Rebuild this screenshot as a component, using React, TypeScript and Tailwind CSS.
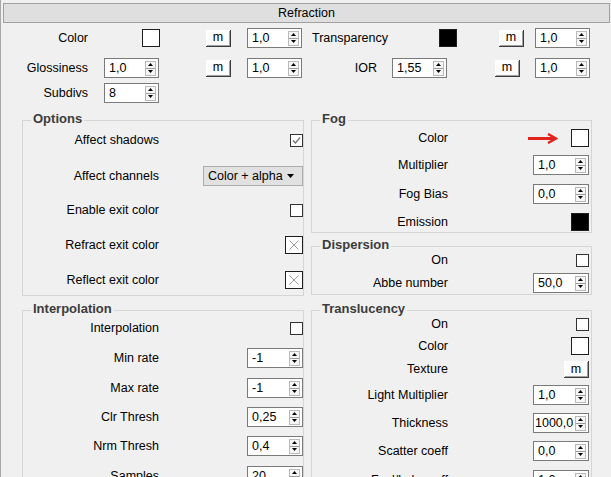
import type { ReactNode } from 'react';

function Spinner({ value, w = 'w-[55px]', pad = 'pl-[4px]' }: { value: string; w?: string; pad?: string }) {
  return (
    <div className={`flex h-[20px] items-center border border-[#7a7a7a] bg-white ${w}`}>
      <span className={`flex-1 overflow-hidden whitespace-nowrap leading-none ${pad}`}>{value}</span>
      <div className="mr-[2px] flex h-[15px] w-[11px] flex-col border border-[#b9b9b9] bg-[#f6f6f6]">
        <div className="flex flex-1 items-center justify-center border-b border-[#9a9a9a]">
          <svg width="5" height="3" viewBox="0 0 5 3">
            <path d="M2.5 0 L5 3 L0 3 Z" fill="#000" />
          </svg>
        </div>
        <div className="flex flex-1 items-center justify-center">
          <svg width="5" height="3" viewBox="0 0 5 3">
            <path d="M0 0 L5 0 L2.5 3 Z" fill="#000" />
          </svg>
        </div>
      </div>
    </div>
  );
}

function MButton() {
  return (
    <div className="flex h-[17px] w-[25px] items-center justify-center border-r border-b border-[#3c3c3c] bg-[#fcfcfc] leading-none shadow-[inset_1px_1px_0_#ffffff,inset_-1px_-1px_0_#a0a0a0]">
      m
    </div>
  );
}

function Swatch({ dark = false }: { dark?: boolean }) {
  return <div className={`h-[18px] w-[18px] border border-[#1e1e1e] ${dark ? 'bg-black' : 'bg-white'}`} />;
}

function CrossSwatch() {
  return (
    <div className="h-[18px] w-[18px] border border-[#1e1e1e] bg-white">
      <svg width="16" height="16" viewBox="0 0 16 16">
        <path d="M3.5 3.5 L12.5 12.5 M12.5 3.5 L3.5 12.5" stroke="#9a9a9a" strokeWidth="1" />
      </svg>
    </div>
  );
}

function Check({ checked = false }: { checked?: boolean }) {
  return (
    <div className="h-[13px] w-[13px] border border-[#333333] bg-white">
      {checked && (
        <svg width="11" height="11" viewBox="0 0 11 11">
          <path d="M2 5.5 L4.5 8 L9 2.5" stroke="#6e6e6e" strokeWidth="1.2" fill="none" />
        </svg>
      )}
    </div>
  );
}

function Dropdown() {
  return (
    <div className="flex h-[20px] w-[100px] items-center justify-between border border-[#adadad] bg-[#e1e1e1] pl-[4px] pr-[8px]">
      <span className="leading-none">Color + alpha</span>
      <svg width="7" height="4" viewBox="0 0 7 4">
        <path d="M0 0 L7 0 L3.5 4 Z" fill="#000" />
      </svg>
    </div>
  );
}

function RedArrow() {
  return (
    <svg width="30" height="11" viewBox="0 0 30 11" className="mr-[13px]">
      <path d="M0 5.5 H26" stroke="#e3231e" strokeWidth="3" />
      <path d="M20 1 L28 5.5 L20 10" stroke="#e3231e" strokeWidth="2.5" fill="none" />
    </svg>
  );
}

function Group({ title, className, children }: { title: string; className: string; children: ReactNode }) {
  return (
    <div className={`relative border border-[#d5d5d5] ${className}`}>
      <span className="absolute -top-[10px] left-[8px] bg-[#f0f0f0] px-[2px] text-[13px] font-bold leading-[15px] text-[#3c3c3c]">
        {title}
      </span>
      {children}
    </div>
  );
}

function Row({ label, mt, children }: { label: string; mt: string; children: ReactNode }) {
  return (
    <div className={`flex items-center ${mt}`}>
      <div className="w-[136px] whitespace-nowrap text-right leading-none">{label}</div>
      <div className="flex flex-1 items-center justify-end">{children}</div>
    </div>
  );
}

export default function App() {
  return (
    <div className="h-[477px] w-[611px] overflow-hidden bg-[#f0f0f0] font-['Liberation_Sans',Arial,sans-serif] text-[12.5px] text-black shadow-[inset_1px_0_0_#a8a8a8]">
      {/* Rollout title */}
      <div className="mt-[3px] mr-[1px] ml-[3px] flex h-[20px] items-center justify-center border border-[#a0a0a0] bg-[#dfdfdf] leading-none">
        Refraction
      </div>

      {/* Main parameters */}
      <div className="mt-[5px] flex h-[20px] items-center">
        <div className="w-[88px] text-right leading-none">Color</div>
        <div className="ml-[54px]"><Swatch /></div>
        <div className="ml-[46px]"><MButton /></div>
        <div className="ml-[16px]"><Spinner value="1,0" /></div>
        <div className="ml-[10px] w-[127px] leading-none">Transparency</div>
        <Swatch dark />
        <div className="ml-[42px]"><MButton /></div>
        <div className="ml-[11px]"><Spinner value="1,0" /></div>
      </div>
      <div className="mt-[10px] flex h-[20px] items-center">
        <div className="w-[88px] text-right leading-none">Glossiness</div>
        <div className="ml-[16px]"><Spinner value="1,0" /></div>
        <div className="ml-[47px]"><MButton /></div>
        <div className="ml-[16px]"><Spinner value="1,0" /></div>
        <div className="w-[75px] text-right leading-none">IOR</div>
        <div className="ml-[15px]"><Spinner value="1,55" /></div>
        <div className="ml-[48px]"><MButton /></div>
        <div className="ml-[15px]"><Spinner value="1,0" /></div>
      </div>
      <div className="mt-[5px] flex h-[20px] items-center">
        <div className="w-[88px] text-right leading-none">Subdivs</div>
        <div className="ml-[16px]"><Spinner value="8" /></div>
      </div>

      {/* Groups */}
      <div className="mt-[17px] flex items-start">
        <div className="ml-[22px] w-[282px]">
          <Group title="Options" className="h-[176px]">
            <Row label="Affect shadows" mt="mt-[13px]"><Check checked /></Row>
            <Row label="Affect channels" mt="mt-[19px]"><Dropdown /></Row>
            <Row label="Enable exit color" mt="mt-[18px]"><Check /></Row>
            <Row label="Refract exit color" mt="mt-[19px]"><CrossSwatch /></Row>
            <Row label="Reflect exit color" mt="mt-[17px]"><CrossSwatch /></Row>
          </Group>
          <Group title="Interpolation" className="mt-[14px] h-[200px]">
            <Row label="Interpolation" mt="mt-[11px]"><Check /></Row>
            <Row label="Min rate" mt="mt-[13px]"><Spinner value="-1" w="w-[56px]" /></Row>
            <Row label="Max rate" mt="mt-[10px]"><Spinner value="-1" w="w-[56px]" /></Row>
            <Row label="Clr Thresh" mt="mt-[9px]"><Spinner value="0,25" w="w-[56px]" /></Row>
            <Row label="Nrm Thresh" mt="mt-[9px]"><Spinner value="0,4" w="w-[56px]" /></Row>
            <Row label="Samples" mt="mt-[10px]"><Spinner value="20" w="w-[56px]" /></Row>
          </Group>
        </div>

        <div className="ml-[7px] w-[281px] pr-0">
          <Group title="Fog" className="h-[113px] pr-[2px]">
            <Row label="Color" mt="mt-[8px]"><RedArrow /><Swatch /></Row>
            <Row label="Multiplier" mt="mt-[8px]"><Spinner value="1,0" w="w-[56px]" /></Row>
            <Row label="Fog Bias" mt="mt-[9px]"><Spinner value="0,0" w="w-[56px]" /></Row>
            <Row label="Emission" mt="mt-[9px]"><Swatch dark /></Row>
          </Group>
          <Group title="Dispersion" className="mt-[13px] h-[49px] pr-[2px]">
            <Row label="On" mt="mt-[7px]"><Check /></Row>
            <Row label="Abbe number" mt="mt-[6px]"><Spinner value="50,0" w="w-[56px]" /></Row>
          </Group>
          <Group title="Translucency" className="mt-[15px] h-[200px] pr-[2px]">
            <Row label="On" mt="mt-[7px]"><Check /></Row>
            <Row label="Color" mt="mt-[6px]"><Swatch /></Row>
            <Row label="Texture" mt="mt-[6px]"><MButton /></Row>
            <Row label="Light Multiplier" mt="mt-[7px]"><Spinner value="1,0" w="w-[56px]" /></Row>
            <Row label="Thickness" mt="mt-[8px]"><Spinner value="1000,0" w="w-[56px]" pad="pl-[1px]" /></Row>
            <Row label="Scatter coeff" mt="mt-[8px]"><Spinner value="0,0" w="w-[56px]" /></Row>
            <Row label="Fwd/bck coeff" mt="mt-[9px]"><Spinner value="1,0" w="w-[56px]" /></Row>
          </Group>
        </div>
      </div>
    </div>
  );
}
